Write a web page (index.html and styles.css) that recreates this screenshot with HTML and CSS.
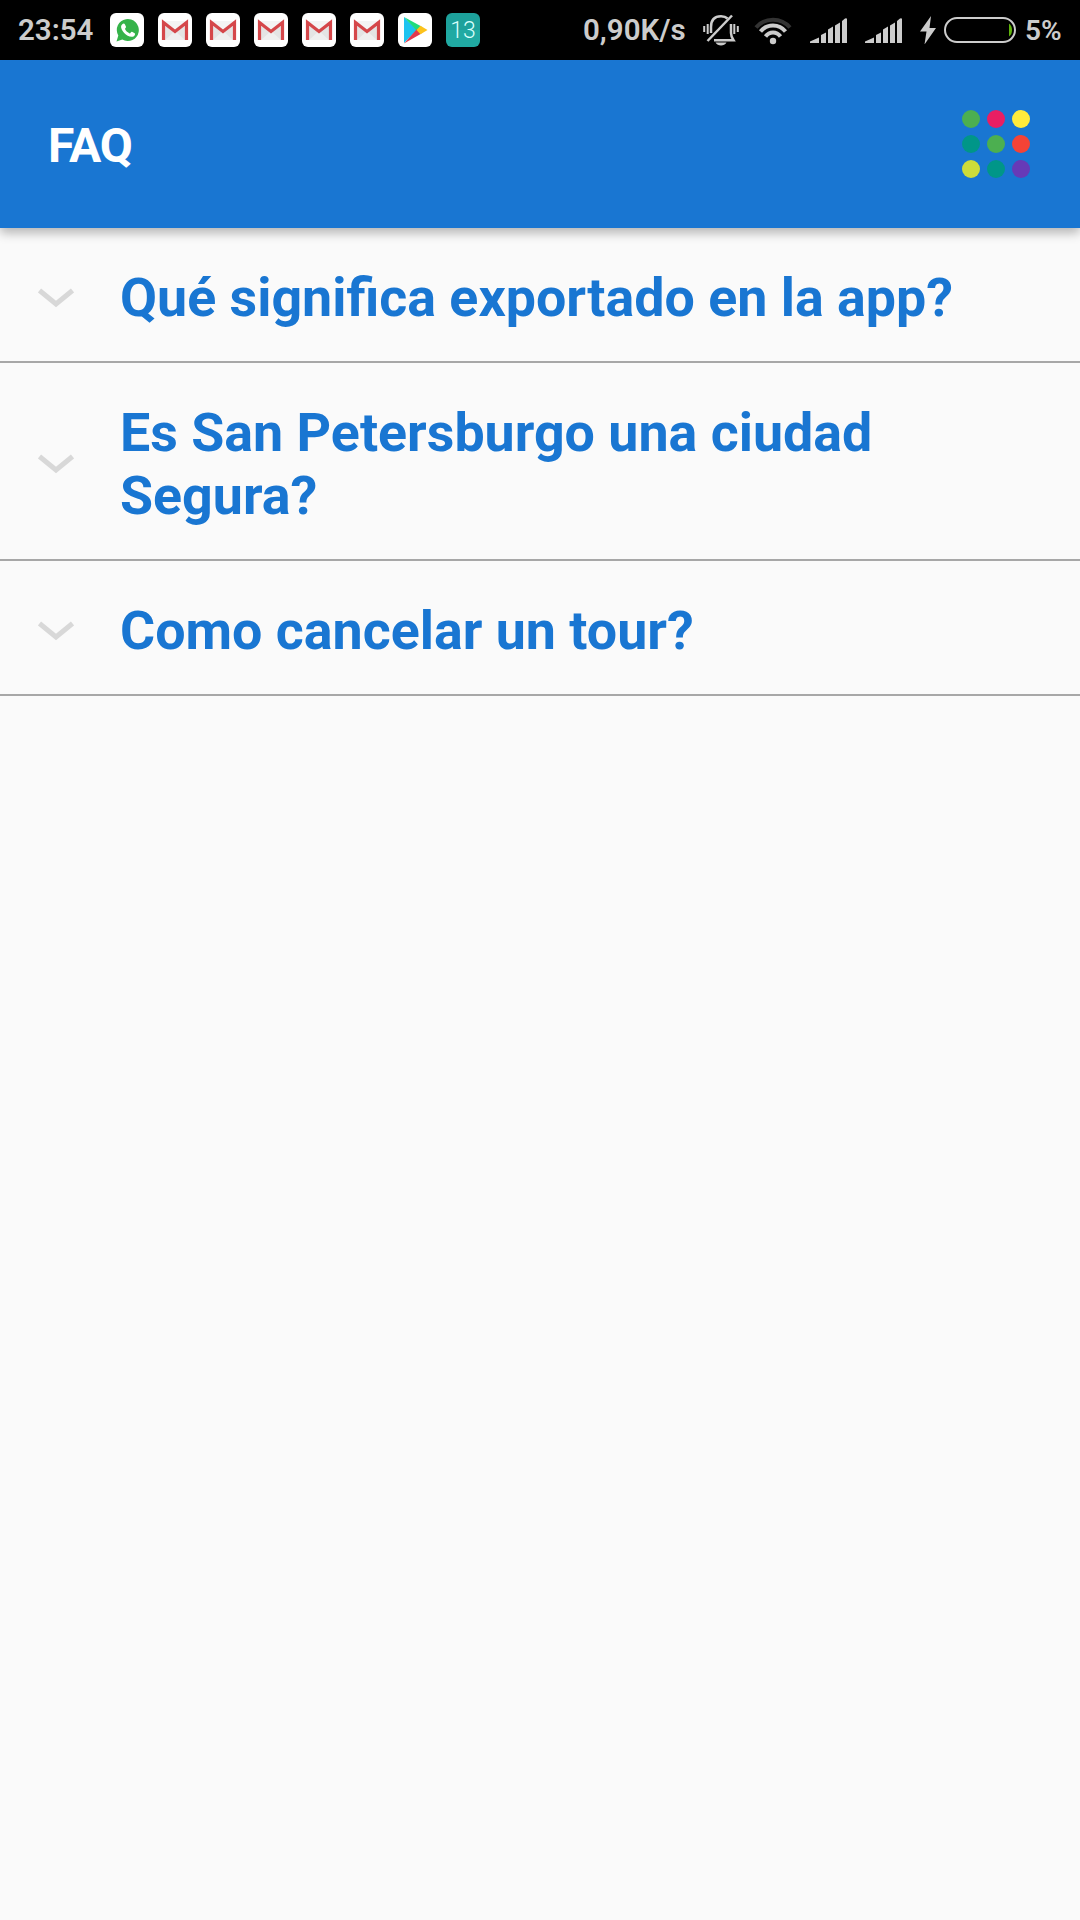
FILE: index.html
```html
<!DOCTYPE html>
<html lang="es">
<head>
  <meta charset="UTF-8">
  <title>FAQ</title>
  <link rel="stylesheet" href="styles.css">
</head>
<body>
  <svg class="defs" width="0" height="0">
    <symbol id="gmail" viewBox="0 0 34 34">
      <rect width="34" height="34" rx="6" fill="#fff"/>
      <path d="M4 9h26v18H4z" fill="#e4e4e4"/>
      <path d="M7 27l10-9 10 9z" fill="#efefef"/>
      <path d="M4.500 8L17 17.500 29.500 8z" fill="#f4f4f4"/>
      <path d="M5.500 27V9.500L17 18.500 28.500 9.500V27" fill="none" stroke="#d5474a" stroke-width="3.200"/>
    </symbol>
    <symbol id="signal" viewBox="0 0 37 26">
      <path d="M0 25v-1.500l9-4V25zM11 25v-8l5-2.500V25zM18 25V11.500l5-3V25zM25 25V7.500l5-3V25zM32 25V3L35 .5q2-1 2 1V25z" fill="#ccc"/>
    </symbol>
    <symbol id="chevron" viewBox="0 0 36 20">
      <path d="M1.500 2.500L18 16 34.500 2.500" fill="none" stroke="#d8d8d8" stroke-width="5"/>
    </symbol>
  </svg>

  <div class="statusbar">
    <span class="clock">23:54</span>
    <div class="notifications">
      <svg width="34" height="34" viewBox="0 0 34 34">
        <rect width="34" height="34" rx="6" fill="#fff"/>
        <path d="M6.500 28.500l1.800-6a11 11 0 1 1 4 4z" fill="#35b34a"/>
        <path d="M12.300 11.200c1-1 2.200-.9 2.700.2l1 2.300c.3.900-1.300 1.900-1 2.400 1 2 2.700 3.600 4.700 4.300.7.200 1.500-2 2.300-1.600l2.700 1.400c1 .6-.2 2.900-1.300 3.300-5.200 2.200-13-6-12.300-10.200.1-.8.500-1.500 1.200-2.100z" fill="#fff"/>
      </svg>
      <svg width="34" height="34"><use href="#gmail"/></svg>
      <svg width="34" height="34"><use href="#gmail"/></svg>
      <svg width="34" height="34"><use href="#gmail"/></svg>
      <svg width="34" height="34"><use href="#gmail"/></svg>
      <svg width="34" height="34"><use href="#gmail"/></svg>
      <svg width="34" height="34" viewBox="0 0 34 34">
        <rect width="34" height="34" rx="6" fill="#fff"/>
        <path d="M6 4v26l13-13z" fill="#1cc3f0"/>
        <path d="M6 4l17.500 9.500L19 18z" fill="#1fdc7c"/>
        <path d="M6 30.500l17.500-10L19 16z" fill="#e2384d"/>
        <path d="M22.500 12.800L29.500 17l-7 4.200L18.500 17z" fill="#fcc21b"/>
      </svg>
      <span class="app-badge">13</span>
    </div>

    <span class="speed">0,90K/s</span>
    <svg class="bell" width="36" height="34" viewBox="0 0 36 34">
      <g fill="none" stroke="#ccc" stroke-width="2.500">
        <path d="M8 20V14C8 6 12.500 3.200 18 3.200c3 0 5 .8 6.500 2.300M28 11v9c0 3 1 5 2.500 7.300H11"/>
        <path d="M4.500 28L29 2.500"/>
        <path d="M1.200 13v6M4.700 11v10M31.300 11v10M34.800 13v6" stroke-width="2"/>
      </g>
      <path d="M12.500 29.500h11c-2 4-9 4-11 0z" fill="#ccc"/>
    </svg>
    <svg class="wifi" width="38" height="28" viewBox="0 0 38 28">
      <g fill="none" stroke="#ccc" stroke-width="4">
        <path d="M2 10.500C11 0 27 0 36 10.500" stroke="#333"/>
        <path d="M6.500 14.500C13 6.500 25 6.500 31.500 14.500"/>
        <path d="M11.500 19.500c4-5.500 11-5.500 15 0"/>
      </g>
      <circle cx="19" cy="24" r="3.200" fill="#ccc"/>
    </svg>
    <svg class="signal" width="37" height="26"><use href="#signal"/></svg>
    <svg class="signal" width="37" height="26"><use href="#signal"/></svg>
    <svg class="bolt" width="16" height="28" viewBox="0 0 16 28">
      <path d="M11 0L0 15.500h6.500L4.500 28.500 16 12H9.500z" fill="#ccc"/>
    </svg>
    <svg class="battery" width="72" height="26" viewBox="0 0 72 26">
      <rect x="1" y="1" width="70" height="24" rx="12" fill="none" stroke="#ccc" stroke-width="2"/>
      <path d="M65 6.500q3 2 3 6.500t-3 6.500z" fill="#5fb30b"/>
    </svg>
    <span class="percent">5%</span>
  </div>

  <header class="toolbar">
    <h1>FAQ</h1>
    <div class="dots">
      <i class="green"></i><i class="pink"></i><i class="yellow"></i>
      <i class="teal"></i><i class="green"></i><i class="red"></i>
      <i class="lime"></i><i class="teal"></i><i class="purple"></i>
    </div>
  </header>

  <ul class="faq">
    <li>
      <svg class="chevron" width="36" height="20"><use href="#chevron"/></svg>
      <span class="question">Qué significa exportado en la app?</span>
    </li>
    <li>
      <svg class="chevron" width="36" height="20"><use href="#chevron"/></svg>
      <span class="question">Es San Petersburgo una ciudad Segura?</span>
    </li>
    <li>
      <svg class="chevron" width="36" height="20"><use href="#chevron"/></svg>
      <span class="question">Como cancelar un tour?</span>
    </li>
  </ul>
</body>
</html>
```
FILE: styles.css
```css
* {
  box-sizing: border-box;
}
body {
  margin: 0;
  min-height: 1920px;
  background: #fafafa;
  font-family: Roboto, "Liberation Sans", sans-serif;
}
svg {
  display: block;
  flex: none;
}
.defs {
  display: none;
}

/* status bar */
.statusbar {
  display: flex;
  align-items: center;
  height: 60px;
  padding-left: 18px;
  background: #000;
  color: #ccc;
  font-size: 29.5px;
  font-weight: 600;
  white-space: nowrap;
}
.clock {
  width: 92px;
}
.notifications {
  display: flex;
  gap: 14px;
}
.app-badge {
  width: 34px;
  height: 34px;
  border-radius: 6px;
  background: linear-gradient(#1da19b 50%, #20aaa3 50%);
  color: #d8fffb;
  font-size: 23px;
  font-weight: 300;
  line-height: 35px;
  text-align: center;
}
.speed {
  width: 120px;
  margin-left: 103px;
}
.wifi {
  margin: 2px 0 0 15px;
}
.signal {
  margin: 2px 0 0 18px;
}
.bolt {
  margin-left: 18px;
}
.battery {
  margin-left: 8px;
}
.percent {
  margin-left: 9px;
  font-size: 28px;
}

/* toolbar */
.toolbar {
  display: flex;
  align-items: center;
  justify-content: space-between;
  height: 168px;
  padding: 0 50px 0 48px;
  background: #1976d2;
  box-shadow: 0 5px 10px rgba(0, 0, 0, 0.28);
}
.toolbar h1 {
  margin: 2px 0 0;
  color: #fff;
  font-size: 48px;
  font-weight: 700;
  letter-spacing: -1px;
}
.dots {
  display: grid;
  grid-template-columns: repeat(3, 18px);
  gap: 7px;
  margin-bottom: 1px;
}
.dots i {
  height: 18px;
  border-radius: 50%;
}
.green { background: #4caf50; }
.pink { background: #e91e63; }
.yellow { background: #ffeb3b; }
.teal { background: #009688; }
.red { background: #f44336; }
.lime { background: #cddc39; }
.purple { background: #673ab7; }

/* question list */
.faq {
  margin: 0;
  padding: 0;
  list-style: none;
}
.faq li {
  display: flex;
  align-items: center;
  padding: 38px 60px 32px 38px;
  border-bottom: 2px solid #a7a7a7;
}
.question {
  margin-left: 46px;
  color: #1976d2;
  font-size: 53.75px;
  font-weight: 700;
  line-height: 63px;
}
```
